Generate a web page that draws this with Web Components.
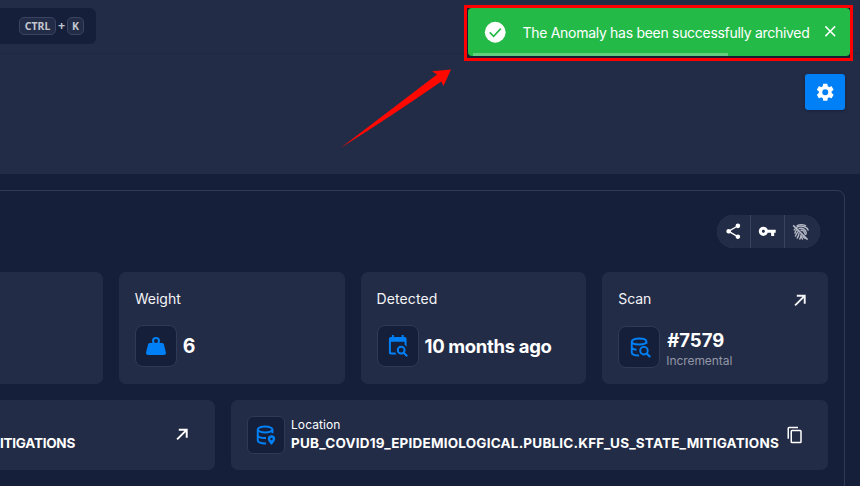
<!DOCTYPE html>
<html lang="en">
<head>
<meta charset="utf-8">
<title>Anomaly</title>
<style>
  html, body { margin: 0; height: 100%; overflow: hidden; background: #161f3a; }
</style>
</head>
<body>
<anomaly-page></anomaly-page>
<script>
const define = (name, html, ready) => {
  const tpl = document.createElement('template');
  tpl.innerHTML = html;
  customElements.define(name, class extends HTMLElement {
    constructor() {
      super();
      this.attachShadow({ mode: 'open' }).appendChild(tpl.content.cloneNode(true));
    }
    connectedCallback() { if (ready) ready(this, this.shadowRoot); }
  });
};

const ICONS = {
  cog: '<path d="M12,15.5A3.5,3.5 0 0,1 8.5,12A3.5,3.5 0 0,1 12,8.5A3.5,3.5 0 0,1 15.5,12A3.5,3.5 0 0,1 12,15.5M19.43,12.97C19.47,12.65 19.5,12.33 19.5,12C19.5,11.67 19.47,11.34 19.43,11L21.54,9.37C21.73,9.22 21.78,8.95 21.66,8.73L19.66,5.27C19.54,5.05 19.27,4.96 19.05,5.05L16.56,6.05C16.04,5.66 15.5,5.32 14.87,5.07L14.5,2.42C14.46,2.18 14.25,2 14,2H10C9.75,2 9.54,2.18 9.5,2.42L9.13,5.07C8.5,5.32 7.96,5.66 7.44,6.05L4.95,5.05C4.73,4.96 4.46,5.05 4.34,5.27L2.34,8.73C2.21,8.95 2.27,9.22 2.46,9.37L4.57,11C4.53,11.34 4.5,11.67 4.5,12C4.5,12.33 4.53,12.65 4.57,12.97L2.46,14.63C2.27,14.78 2.21,15.05 2.34,15.27L4.34,18.73C4.46,18.95 4.73,19.03 4.95,18.95L7.44,17.94C7.96,18.34 8.5,18.68 9.13,18.93L9.5,21.58C9.54,21.82 9.75,22 10,22H14C14.25,22 14.46,21.82 14.5,21.58L14.87,18.93C15.5,18.67 16.04,18.34 16.56,17.94L19.05,18.95C19.27,19.03 19.54,18.95 19.66,18.73L21.66,15.27C21.78,15.05 21.73,14.78 21.54,14.63L19.43,12.97Z"/>',
  share: '<path d="M18,16.08C17.24,16.08 16.56,16.38 16.04,16.85L8.91,12.7C8.96,12.47 9,12.24 9,12C9,11.76 8.96,11.53 8.91,11.3L15.96,7.19C16.5,7.69 17.21,8 18,8A3,3 0 0,0 21,5A3,3 0 0,0 18,2A3,3 0 0,0 15,5C15,5.24 15.04,5.47 15.09,5.7L8.04,9.81C7.5,9.31 6.79,9 6,9A3,3 0 0,0 3,12A3,3 0 0,0 6,15C6.79,15 7.5,14.69 8.04,14.19L15.16,18.34C15.11,18.55 15.08,18.77 15.08,19C15.08,20.61 16.39,21.91 18,21.91C19.61,21.91 20.92,20.61 20.92,19A2.92,2.92 0 0,0 18,16.08Z"/>',
  key: '<path d="M7 14c-1.1 0-2-.9-2-2s.9-2 2-2 2 .9 2 2-.9 2-2 2m5.65-4C11.83 7.67 9.61 6 7 6a6 6 0 0 0-6 6 6 6 0 0 0 6 6c2.61 0 4.83-1.67 5.65-4H17v4h4v-4h2v-4H12.65z"/>',
  fingerprint: '<g fill="none" stroke="currentColor" stroke-width="1.9" stroke-linecap="round"><path d="M7 3.6Q12 .8 18 3.6M5.5 6.2Q12 2 19.5 6.5Q21 8 21.5 9.5M9.5 7.4C14 6 18.6 8.6 19 13Q19 15.5 17.5 15.5M12 9.7c3 0 4.6 2 4.8 4M3 9.2L4.2 7.8M4 13.5Q4.2 11 6 9.3M4.6 17.3C6 15.5 5.8 13.4 8 11.6M7 20Q9.3 17 9.3 13.8M10.4 21.4Q12 18.6 12 16M14 21.4Q12.4 19.6 12.6 17.3M17.6 20.6Q15.4 19.6 14.8 18"/></g><path d="M1.6 3.2L20.8 22.2" stroke="currentColor" stroke-width="2.1"/>',
  weight: '<path d="M12,3A4,4 0 0,1 16,7C16,7.73 15.81,8.41 15.46,9H18C18.95,9 19.75,9.67 19.95,10.56C21.96,18.57 22,18.78 22,19A2,2 0 0,1 20,21H4A2,2 0 0,1 2,19C2,18.78 2.04,18.57 4.05,10.56C4.25,9.67 5.05,9 6,9H8.54C8.19,8.41 8,7.73 8,7A4,4 0 0,1 12,3M12,5A2,2 0 0,0 10,7A2,2 0 0,0 12,9A2,2 0 0,0 14,7A2,2 0 0,0 12,5Z"/>',
  calendar: '<path d="M15.5,12C18,12 20,14 20,16.5C20,17.38 19.75,18.21 19.31,18.9L22.39,22L21,23.39L17.88,20.32C17.19,20.75 16.37,21 15.5,21C13,21 11,19 11,16.5C11,14 13,12 15.5,12M15.5,14A2.5,2.5 0 0,0 13,16.5A2.5,2.5 0 0,0 15.5,19A2.5,2.5 0 0,0 18,16.5A2.5,2.5 0 0,0 15.5,14M19,8H5V19H9.5C9.81,19.75 10.26,20.42 10.81,21H5C3.89,21 3,20.1 3,19V5C3,3.89 3.89,3 5,3H6V1H8V3H16V1H18V3H19A2,2 0 0,1 21,5V13.03C20.5,12.23 19.81,11.54 19,11V8Z"/>',
  dbsearch: '<g fill="none" stroke="currentColor" stroke-width="2.1"><path d="M19 8.5V6C19 4.1 15.5 2.7 11 2.7S3 4.1 3 6V18c0 1.9 3.2 3.2 8 3.3M3 6c0 1.9 3.5 3.2 8 3.2s8-1.3 8-3.2M3 12c0 1.4 2 2.5 5.2 3"/><circle cx="16.3" cy="16" r="4.1"/><path d="M19.2 19l4 4" stroke-width="2.4"/></g>',
  dbpin: '<g fill="none" stroke="currentColor" stroke-width="2.1"><ellipse cx="11" cy="6" rx="8" ry="3.3"/><path d="M3 6v12c0 1.8 3.5 3.3 8 3.3h1M19 6v4M3 12c0 1.9 3.5 3.3 8 3.3h1"/></g><path fill-rule="evenodd" d="M18 12.2a4 4 0 0 1 4 4c0 2.6-4 6.8-4 6.8s-4-4.2-4-6.8a4 4 0 0 1 4-4m0 2.8a1.3 1.3 0 1 0 0 2.6a1.3 1.3 0 1 0 0-2.6"/>',
  arrow: '<path d="M4.5 19.5L18 6M7 5.5H18.5V17" fill="none" stroke="currentColor" stroke-width="2.8"/>',
  copy: '<path d="M19,21H8V7H19M19,5H8A2,2 0 0,0 6,7V21A2,2 0 0,0 8,23H19A2,2 0 0,0 21,21V7A2,2 0 0,0 19,5M16,1H4A2,2 0 0,0 2,3V17H4V3H16V1Z"/>',
  close: '<path d="M19,6.41L17.59,5L12,10.59L6.41,5L5,6.41L10.59,12L5,17.59L6.41,19L12,13.41L17.59,19L19,17.59L13.41,12L19,6.41Z"/>',
  check: '<circle cx="12" cy="12" r="10.2"/><path d="M6.6 12.2l3.8 3.7 7-7.4" fill="none" stroke="#24ba48" stroke-width="1.6"/>'
};

define('ui-icon', `<style>
  :host { display: block; flex: none; width: var(--size, 20px); height: var(--size, 20px); }
  svg { display: block; width: 100%; height: 100%; fill: currentColor; }
</style><svg viewBox="0 0 24 24"></svg>`, (el, root) => {
  el.style.setProperty('--size', (el.getAttribute('size') || 20) + 'px');
  root.querySelector('svg').innerHTML = ICONS[el.getAttribute('name')];
});

/* One line of text, tracked so that it spans the given width. */
define('ui-text', `<style>
  :host { display: block; flex: none; white-space: nowrap; font: 500 14px/20px Inter, "Open Sans", sans-serif; }
  span { display: inline-block; }
</style><span><slot></slot></span>`, (el, root) => {
  const span = root.querySelector('span');
  const size = el.getAttribute('size');
  if (size) el.style.fontSize = size + 'px';
  if (el.hasAttribute('line')) el.style.lineHeight = el.getAttribute('line') + 'px';
  if (el.hasAttribute('weight')) el.style.fontWeight = el.getAttribute('weight');
  const width = Number(el.getAttribute('width'));
  if (width) {
    const natural = span.getBoundingClientRect().width;
    el.style.letterSpacing = (width - natural) / el.textContent.length + 'px';
  }
});

define('key-cap', `<style>
  :host { display: flex; box-sizing: border-box; height: 18px; align-items: center; justify-content: center;
    border: 1px solid #3a4361; border-radius: 5px; background: #232c47; color: #c3c7d0;
    font: 700 10.5px/16px "Noto Sans", sans-serif; }
</style><slot></slot>`);

define('search-box', `<style>
  :host { display: flex; box-sizing: border-box; width: 96px; height: 36px; padding-left: 19px; align-items: center;
    background: #161f3a; border-radius: 0 6px 6px 0; }
  .ctrl { width: 37px; } .k { width: 17px; }
  b { width: 11px; text-align: center; color: #c3c7d0; font: 700 12.5px/16px "Noto Sans", sans-serif; }
</style><key-cap class="ctrl">CTRL</key-cap><b>+</b><key-cap class="k">K</key-cap>`);

define('top-bar', `<style>
  :host { display: flex; box-sizing: border-box; height: 54px; padding-top: 8px; border-bottom: 1px solid #1f2842; background: #232c47; }
</style><slot></slot>`);

define('page-header', `<style>
  :host { display: flex; box-sizing: border-box; height: 120px; padding: 20px 15px 0 0; justify-content: flex-end; background: #232c47; }
  button { display: grid; place-items: center; width: 40px; height: 36px; padding: 0; border: 0; border-radius: 3px;
    background: #0080f7; color: #fff; box-shadow: 0 1px 3px #10182f99; }
</style><button><ui-icon name="cog" size="20.5"></ui-icon></button>`);

define('action-group', `<style>
  :host { display: grid; grid-template-columns: 33px 33px 35px; gap: 1px; width: 103px; height: 33px; margin-left: auto;
    border-radius: 17px; overflow: hidden; background: #3a4360; color: #fff; }
  div { display: grid; place-items: center; background: #232c47; }
  .share { padding-right: 1px; }
  .off { color: #b4b8c4; padding-right: 3px; }
</style><div class="share"><ui-icon name="share" size="18.5"></ui-icon></div><div><ui-icon name="key" size="18.5"></ui-icon></div><div class="off"><ui-icon name="fingerprint" size="18"></ui-icon></div>`);

define('icon-tile', `<style>
  :host { display: grid; flex: none; box-sizing: border-box; place-items: center; width: 42px; height: 42px;
    border: 1px solid #303955; border-radius: 8px; background: #161f3a; color: #0080f7; }
  :host([small]) { width: 38px; height: 38px; border-radius: 6px; }
</style><slot></slot>`);

define('stat-card', `<style>
  :host { display: flex; flex-direction: column; box-sizing: border-box; padding: 17px 16px 0; gap: 15px; border-radius: 7px; background: #232c47; color: #f3f4f6; }
  :host([detailed]) { gap: 14.5px; }
  .head { display: flex; justify-content: space-between; height: 21px; }
  .body { display: flex; align-items: center; gap: 6px; color: #fff; }
</style><div class="head"><slot name="label"></slot><slot name="action"></slot></div><div class="body"><slot></slot></div>`);

define('info-card', `<style>
  :host { display: flex; box-sizing: border-box; align-items: center; padding: 0 16px; gap: 6px; border-radius: 7px; background: #232c47; color: #fff; }
</style><slot></slot>`);

define('toast-message', `<style>
  :host { position: absolute; left: 464px; top: 5px; box-sizing: border-box; width: 389px; height: 56px; border: 3px solid #f00; background: #151d33; }
  .toast { display: flex; align-items: center; box-sizing: border-box; height: 48px; padding: 0 11px 0 15px; margin-left: 1px; border-radius: 4px; background: #24ba48; color: #fff; }
  ui-text { margin-left: 15px; margin-top: 2px; }
  .close { margin: -2px 0 0 auto; }
  .bar { width: 255px; height: 3px; margin: -3px 0 0 6px; background: #63ce7d; }
</style><div class="toast"><ui-icon name="check" size="24.5"></ui-icon><ui-text size="14" weight="400"><slot></slot></ui-text><ui-icon class="close" name="close" size="18.5"></ui-icon></div><div class="bar"></div>`, (el, root) => {
  const label = root.querySelector('ui-text');
  const w = label.getBoundingClientRect().width;
  label.style.letterSpacing = (287 - w) / el.textContent.length + 'px';
});

define('pointer-arrow', `<style>
  :host { position: absolute; left: 330px; top: 60px; }
  svg { display: block; }
</style><svg width="135" height="95" viewBox="0 0 135 95"><path fill="#ff0800" d="M10.5 88L107 14.5L102 11.3L121 9.5L113.5 26L111.3 21.5Q60 57 10.5 88Z"/></svg>`);

define('anomaly-page', `<style>
  :host { display: block; position: relative; width: 860px; height: 486px; overflow: hidden; background: #161f3a; }
  main { box-sizing: border-box; width: 985px; height: 330px; margin: 16px 0 0 -140px; padding: 24px 16px 0;
    border: 1px solid #303955; border-radius: 8px; }
  action-group { margin-right: 8px; }
  .stats { display: grid; grid-template-columns: repeat(4, 1fr); gap: 16px; height: 112px; margin-top: 24px; }
  .infos { display: grid; grid-template-columns: 338px 597px; gap: 16px; height: 70px; margin-top: 16px; }
  .stack { display: flex; flex-direction: column; }
  .scan { margin-top: 3px; margin-left: 1px; }
  .muted { color: #9297a6; margin-left: -1px; }
  .arrow1 { margin: 3px 4px 0 0; }
  .find { margin-left: 2px; }
  .title { justify-content: flex-end; }
  .title ui-text { margin: 16px 93px 0 0; }
  .title ui-icon { margin: -1px 8.5px 0 0; }
  .place { margin-top: -2px; }
  .copy { margin-left: 1px; }
</style>
<top-bar><search-box></search-box></top-bar>
<page-header></page-header>
<main>
  <action-group></action-group>
  <div class="stats">
    <stat-card></stat-card>
    <stat-card><ui-text slot="label" weight="400" width="46">Weight</ui-text>
      <icon-tile><ui-icon name="weight" size="24"></ui-icon></icon-tile><ui-text size="19.5" weight="700" width="12.5">6</ui-text></stat-card>
    <stat-card><ui-text slot="label" weight="400" width="61">Detected</ui-text>
      <icon-tile><ui-icon name="calendar" size="23.5"></ui-icon></icon-tile><ui-text size="18.5" weight="700" width="127">10 months ago</ui-text></stat-card>
    <stat-card detailed><ui-text slot="label" weight="400" width="33">Scan</ui-text><ui-icon class="arrow1" slot="action" name="arrow" size="16.5"></ui-icon>
      <icon-tile><ui-icon class="find" name="dbsearch" size="22"></ui-icon></icon-tile><div class="stack scan"><ui-text size="18.5" line="24" weight="700" width="57">#7579</ui-text><ui-text class="muted" size="12" line="18" weight="400" width="66">Incremental</ui-text></div></stat-card>
  </div>
  <div class="infos">
    <info-card class="title"><ui-text size="13.5" weight="700" width="75">ITIGATIONS</ui-text><ui-icon name="arrow" size="16.5"></ui-icon></info-card>
    <info-card><icon-tile small><ui-icon name="dbpin" size="22"></ui-icon></icon-tile><div class="stack place"><ui-text size="12" line="18" weight="400" width="49.5">Location</ui-text><ui-text size="13.5" line="18" weight="700" width="488">PUB_COVID19_EPIDEMIOLOGICAL.PUBLIC.KFF_US_STATE_MITIGATIONS</ui-text></div><ui-icon class="copy" name="copy" size="18"></ui-icon></info-card>
  </div>
</main>
<pointer-arrow></pointer-arrow>
<toast-message>The Anomaly has been successfully archived</toast-message>`);
</script>
</body>
</html>
